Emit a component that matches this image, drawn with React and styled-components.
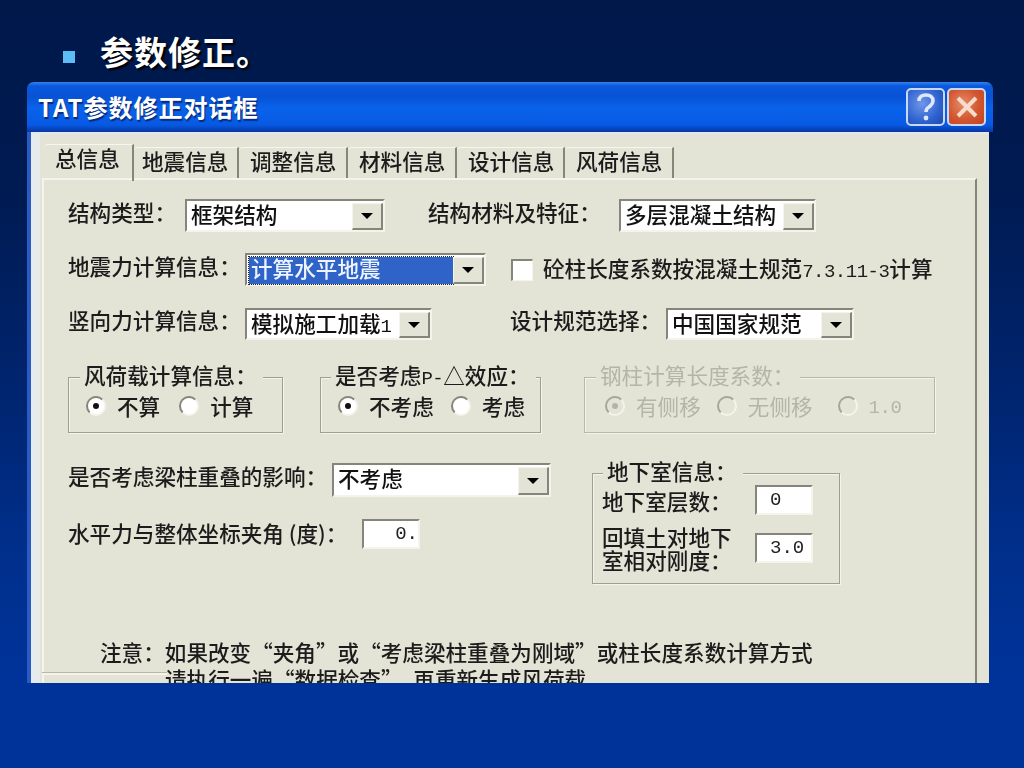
import React from 'react'
import styled, { createGlobalStyle } from 'styled-components'

const colors = {
  face: '#e3e3d6',
  shade: '#85857a',
  groove: '#9f9f90',
  text: '#1c1c1c',
  disabled: '#b4b4a8',
  highlight: '#2f63c8'
}

const fontSize = '21.6px'

const GlobalStyle = createGlobalStyle`
  html, body {
    margin: 0;
    padding: 0;
    background: #003399;
  }
`

const Slide = styled.div`
  width: 1024px;
  height: 768px;
  overflow: hidden;
  background: linear-gradient(180deg, #00184a 0%, #001b52 25%, #00246e 50%, #002f8c 72%, #003399 88%);
  font-family: "Noto Sans CJK SC", "Liberation Sans", sans-serif;
`

const Heading = styled.div`
  height: 82px;
  box-sizing: border-box;
  padding: 32px 0 0 63px;
  display: flex;
  align-items: center;
  gap: 25px;
`

const Bullet = styled.span`
  width: 12px;
  height: 12px;
  background: #5dbcf4;
`

const HeadingText = styled.h1`
  margin: 0 0 12px;
  font-size: 33px;
  line-height: 44px;
  font-weight: 700;
  color: #fff;
  letter-spacing: 1px;
  text-shadow: 2px 2px 2px #000;
`

const Window = styled.div`
  width: 966px;
  height: 601px;
  margin-left: 27px;
  overflow: hidden;
  border-radius: 7px 7px 0 0;
  background: linear-gradient(90deg, #2a5ac4 0, #2a5ac4 4px, transparent 4px);
  filter: blur(0.4px);
`

const TitleBar = styled.div`
  height: 50px;
  box-sizing: border-box;
  padding: 0 7px 0 11px;
  display: flex;
  align-items: center;
  justify-content: space-between;
  background: linear-gradient(180deg, #2f84ec 0%, #0b58dd 8%, #0753d6 30%, #0a63ea 52%, #0759e4 86%, #0a3fb0 96%, #083aa6 100%);
`

const TitleText = styled.div`
  font-size: 24px;
  line-height: 30px;
  font-weight: 700;
  letter-spacing: 1px;
  color: #fff;
  text-shadow: 1px 2px 1px #0b2a78;
`

const Caption = styled.div`
  display: flex;
  gap: 2px;
`

const CaptionButton = styled.div`
  width: 39px;
  height: 38px;
  box-sizing: border-box;
  border: 2px solid #c9d8f6;
  border-radius: 5px;
  display: flex;
  align-items: center;
  justify-content: center;
  background: ${p => p.$close
    ? 'radial-gradient(circle at 40% 40%, #e88a6a 0%, #d2562f 55%, #bf4320 100%)'
    : 'radial-gradient(circle at 40% 40%, #6f97ea 0%, #2f63cf 60%, #1c48b0 100%)'};
`

const Body = styled.div`
  height: 551px;
  margin: 0 4px;
  box-sizing: border-box;
  padding: 11px 12px 0 2px;
  background: ${colors.face};
  border-top: 2px solid #dfe8f3;
  border-left: 9px solid #e6ecec;
`

const Tabs = styled.div`
  display: flex;
  align-items: flex-end;
  height: 33px;
  padding-left: 2px;
`

const Tab = styled.div`
  box-sizing: border-box;
  width: ${p => p.$width}px;
  height: ${p => (p.$active ? 37 : 31)}px;
  padding-left: ${p => p.$pad}px;
  font-size: ${fontSize};
  font-weight: 500;
  line-height: 26px;
  color: ${colors.text};
  white-space: nowrap;
  border-right: 2px solid ${colors.shade};
  border-top: 1px solid #f6f6ee;
  border-top-left-radius: 4px;
  margin-bottom: ${p => (p.$active ? -3 : 0)}px;
`

const Panel = styled.div`
  height: 520px;
  box-sizing: border-box;
  padding: 19px 0 0 24px;
  border-top: 2px solid #f4f4ec;
  border-left: 2px solid #f4f4ec;
  border-right: 2px solid ${colors.shade};
  color: ${colors.text};
`

const Row = styled.div`
  display: flex;
  align-items: center;
  height: ${p => p.$height || 33}px;
  margin-top: ${p => p.$top || 0}px;
`

const Label = styled.span`
  width: ${p => (p.$width ? `${p.$width}px` : 'auto')};
  flex: none;
  margin: 0 0 ${p => p.$lift ?? 8}px ${p => p.$left || 0}px;
  font-size: ${fontSize};
  font-weight: 500;
  line-height: 28px;
  white-space: nowrap;
`

const Ascii = styled.span`
  font-family: "Liberation Mono", monospace;
  font-size: 19px;
  letter-spacing: -0.5px;
`

const ComboBox = styled.div`
  width: ${p => p.$width}px;
  height: ${p => p.$height || 33}px;
  flex: none;
  box-sizing: border-box;
  padding: 2px 0 0 2px;
  display: flex;
  background: #fff;
  border-top: 2px solid ${colors.shade};
  border-left: 2px solid ${colors.shade};
  border-right: 2px solid #f4f4ec;
  border-bottom: 2px solid #f4f4ec;
`

const ComboText = styled.div`
  flex: 1;
  min-width: 0;
  padding-left: 2px;
  font-size: ${fontSize};
  font-weight: 500;
  line-height: 22px;
  white-space: nowrap;
  color: ${p => (p.$selected ? '#eef4ff' : '#111')};
  background: ${p => (p.$selected ? colors.highlight : 'transparent')};
  outline: ${p => (p.$selected ? '1px dotted #222' : 'none')};
`

const ComboButton = styled.div`
  width: 28px;
  flex: none;
  display: flex;
  align-items: center;
  justify-content: center;
  background: ${colors.face};
  border-right: 2px solid ${colors.shade};
  border-bottom: 2px solid ${colors.shade};
  border-top: 1px solid #f4f4ec;
  border-left: 1px solid #f4f4ec;
  &::after {
    content: '';
    border-top: 6px solid #000;
    border-left: 6px solid transparent;
    border-right: 6px solid transparent;
  }
`

const CheckBox = styled.span`
  width: 22px;
  height: 22px;
  flex: none;
  margin-left: 25px;
  box-sizing: border-box;
  background: #fff;
  border-top: 2px solid ${colors.shade};
  border-left: 2px solid ${colors.shade};
  border-right: 1px solid #f4f4ec;
  border-bottom: 1px solid #f4f4ec;
`

const Group = styled.div`
  position: relative;
  width: ${p => p.$width}px;
  height: ${p => p.$height}px;
  flex: none;
  margin: ${p => p.$top || 0}px 0 0 ${p => p.$left || 0}px;
  box-sizing: border-box;
  border: 1px solid ${p => (p.$disabled ? '#b8b8a9' : colors.groove)};
  box-shadow: 1px 1px 0 #f4f4ec, inset 1px 1px 0 #f4f4ec;
`

const Legend = styled.span`
  position: absolute;
  left: ${p => p.$left}px;
  top: -17px;
  padding: 0 6px 0 4px;
  background: ${colors.face};
  font-size: ${fontSize};
  font-weight: ${p => (p.$disabled ? 400 : 500)};
  line-height: 28px;
  white-space: nowrap;
  color: ${p => (p.$disabled ? colors.disabled : colors.text)};
`

const RadioRow = styled.div`
  display: flex;
  align-items: center;
  height: 100%;
  padding: 2px 0 0 ${p => p.$left}px;
  box-sizing: border-box;
`

const RadioDot = styled.span`
  width: 20px;
  height: 20px;
  flex: none;
  box-sizing: border-box;
  border-radius: 50%;
  display: flex;
  align-items: center;
  justify-content: center;
  background: ${p => (p.$disabled ? colors.face : '#fff')};
  border: 2px solid;
  border-color: ${p => (p.$disabled ? '#a5a598' : colors.shade)} #f4f4ec #f4f4ec ${p => (p.$disabled ? '#a5a598' : colors.shade)};
  margin-right: 11px;
  &::after {
    content: '';
    display: ${p => (p.$on ? 'block' : 'none')};
    width: 6px;
    height: 6px;
    border-radius: 50%;
    background: ${p => (p.$disabled ? colors.disabled : '#111')};
  }
`

const RadioLabel = styled.span`
  font-size: ${fontSize};
  font-weight: ${p => (p.$disabled ? 400 : 500)};
  line-height: 28px;
  white-space: nowrap;
  margin-right: ${p => p.$gap}px;
  color: ${p => (p.$disabled ? colors.disabled : colors.text)};
`

const Columns = styled.div`
  display: flex;
  margin-top: 30px;
  align-items: flex-start;
`

const LeftColumn = styled.div`
  width: 524px;
  flex: none;
`

const NumberBox = styled.div`
  width: 58px;
  height: 30px;
  flex: none;
  margin-left: ${p => p.$left || 0}px;
  box-sizing: border-box;
  padding: 0 ${p => (p.$right ? 0 : 14)}px 0 ${p => (p.$right ? 0 : 13)}px;
  font-family: "Liberation Mono", monospace;
  font-size: 19px;
  line-height: 26px;
  text-align: ${p => (p.$right ? 'right' : 'left')};
  color: #222;
  background: #fff;
  border-top: 2px solid ${colors.shade};
  border-left: 2px solid ${colors.shade};
  border-right: 2px solid #f4f4ec;
  border-bottom: 2px solid #f4f4ec;
`

const Basement = styled.div`
  margin-top: 11px;
  padding-left: 9px;
  box-sizing: border-box;
`

const BaseLabel = styled.div`
  width: 135px;
  flex: none;
  font-size: ${fontSize};
  font-weight: 500;
  line-height: 23px;
`

const Note = styled.div`
  position: relative;
  margin: 54px 0 0 32px;
  font-size: ${fontSize};
  font-weight: 500;
  line-height: 27px;
  white-space: nowrap;
`

const NoteLine = styled.div`
  padding-left: ${p => p.$indent || 0}px;
`

const HiddenButton = styled.div`
  position: absolute;
  left: -58px;
  top: 35px;
  width: 123px;
  height: 30px;
  border-top: 2px solid #f4f4ec;
  border-left: 2px solid #f4f4ec;
  box-shadow: 0 -1px 0 #b8b8aa;
`

const Combo = ({ width, height, selected, children }) => (
  <ComboBox $width={width} $height={height}>
    <ComboText $selected={selected}>{children}</ComboText>
    <ComboButton />
  </ComboBox>
)

const Radio = ({ on, disabled, gap, children }) => (
  <>
    <RadioDot $on={on} $disabled={disabled} />
    <RadioLabel $gap={gap} $disabled={disabled}>{children}</RadioLabel>
  </>
)

const tabs = [
  { name: '总信息', width: 90, pad: 11, active: true },
  { name: '地震信息', width: 105, pad: 8 },
  { name: '调整信息', width: 109, pad: 11 },
  { name: '材料信息', width: 109, pad: 11 },
  { name: '设计信息', width: 108, pad: 11 },
  { name: '风荷信息', width: 109, pad: 11 }
]

export default function App() {
  return (
    <Slide>
      <GlobalStyle />
      <Heading>
        <Bullet />
        <HeadingText>参数修正。</HeadingText>
      </Heading>
      <Window>
        <TitleBar>
          <TitleText>TAT参数修正对话框</TitleText>
          <Caption>
            <CaptionButton>
              <svg width="24" height="30" viewBox="0 0 24 30">
                <path d="M5 9c0-4 3-6 7-6s7 2 7 6c0 3-2 4-4 6-2 1-3 2-3 5" fill="none" stroke="#dfe8fb" strokeWidth="3.6" />
                <circle cx="12" cy="26" r="2.4" fill="#dfe8fb" />
              </svg>
            </CaptionButton>
            <CaptionButton $close>
              <svg width="26" height="26" viewBox="0 0 26 26">
                <path d="M4 4l18 18M22 4L4 22" stroke="#f6dccd" strokeWidth="4" />
              </svg>
            </CaptionButton>
          </Caption>
        </TitleBar>
        <Body>
          <Tabs>
            {tabs.map(tab => (
              <Tab key={tab.name} $width={tab.width} $pad={tab.pad} $active={tab.active}>{tab.name}</Tab>
            ))}
          </Tabs>
          <Panel>
            <Row>
              <Label $width={117}>结构类型：</Label>
              <Combo width={200}>框架结构</Combo>
              <Label $width={191} $left={43}>结构材料及特征：</Label>
              <Combo width={197}>多层混凝土结构</Combo>
            </Row>
            <Row $top={21}>
              <Label $width={177}>地震力计算信息：</Label>
              <Combo width={241} selected>计算水平地震</Combo>
              <CheckBox />
              <Label $left={10} $lift={0}>砼柱长度系数按混凝土规范<Ascii>7.3.11-3</Ascii>计算</Label>
            </Row>
            <Row $top={22} $height={32}>
              <Label $width={177}>竖向力计算信息：</Label>
              <Combo width={187} height={32}>模拟施工加载<Ascii>1</Ascii></Combo>
              <Label $width={156} $left={78}>设计规范选择：</Label>
              <Combo width={188} height={32}>中国国家规范</Combo>
            </Row>
            <Row $top={37} $height={56}>
              <Group $width={215} $height={56}>
                <Legend $left={11}>风荷载计算信息：</Legend>
                <RadioRow $left={17}>
                  <Radio on gap={19}>不算</Radio>
                  <Radio gap={0}>计算</Radio>
                </RadioRow>
              </Group>
              <Group $width={221} $height={56} $left={37}>
                <Legend $left={10}>是否考虑<Ascii>P-</Ascii>△效应：</Legend>
                <RadioRow $left={17}>
                  <Radio on gap={17}>不考虑</Radio>
                  <Radio gap={0}>考虑</Radio>
                </RadioRow>
              </Group>
              <Group $width={351} $height={56} $disabled $left={43}>
                <Legend $left={11} $disabled>钢柱计算长度系数：</Legend>
                <RadioRow $left={20}>
                  <Radio on disabled gap={16}>有侧移</Radio>
                  <Radio disabled gap={25}>无侧移</Radio>
                  <Radio disabled gap={0}><Ascii>1.0</Ascii></Radio>
                </RadioRow>
              </Group>
            </Row>
            <Columns>
              <LeftColumn>
                <Row $height={34}>
                  <Label $width={264}>是否考虑梁柱重叠的影响：</Label>
                  <Combo width={219} height={34}>不考虑</Combo>
                </Row>
                <Row $top={22} $height={30}>
                  <Label $width={294} $lift={2}>水平力与整体坐标夹角 (度)：</Label>
                  <NumberBox $right>0.</NumberBox>
                </Row>
              </LeftColumn>
              <Group $width={248} $height={111} $top={10}>
                <Legend $left={10}>地下室信息：</Legend>
                <Basement>
                  <Row $height={30}>
                    <BaseLabel>地下室层数：</BaseLabel>
                    <NumberBox $left={18}>0</NumberBox>
                  </Row>
                  <Row $height={46} $top={10}>
                    <BaseLabel>回填土对地下室相对刚度：</BaseLabel>
                    <NumberBox $left={18}>3.0</NumberBox>
                  </Row>
                </Basement>
              </Group>
            </Columns>
            <Note>
              <HiddenButton />
              <NoteLine>注意：如果改变“夹角”或“考虑梁柱重叠为刚域”或柱长度系数计算方式</NoteLine>
              <NoteLine $indent={65}>请执行一遍“数据检查”，再重新生成风荷载</NoteLine>
            </Note>
          </Panel>
        </Body>
      </Window>
    </Slide>
  )
}
